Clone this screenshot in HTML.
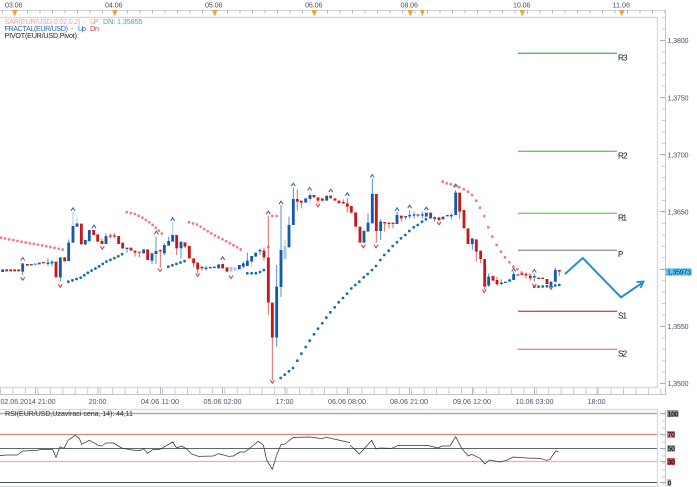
<!DOCTYPE html>
<html lang="cs">
<head>
<meta charset="utf-8">
<title>EUR/USD</title>
<style>
html,body{margin:0;padding:0;background:#fff;width:697px;height:487px;overflow:hidden}
svg{display:block;font-family:"Liberation Sans",sans-serif;font-size:7.2px;filter:blur(.35px)}
</style>
</head>
<body>
<svg width="697" height="487" viewBox="0 0 697 487" xmlns="http://www.w3.org/2000/svg">
<rect width="697" height="487" fill="#fff"/>

<!-- top axis -->
<g fill="none">
<path d="M0 10.5H665" stroke="#ccd0d8"/>
<path d="M0 17.5H657.5V387.5H0" stroke="#d6dae2" stroke-width="1.4"/>
<path d="M2 12H665" stroke="#b4b8c2" stroke-width="3" stroke-dasharray="1 11.5"/>
<path d="M665.5 10V394.5H0" stroke="#c4c8d2"/>
<path d="M663.5 17V388" stroke="#c4c8d2" stroke-width="3" stroke-dasharray="1 10.44"/>
<path d="M660 40.5h5M660 97.5h5M660 154.5h5M660 211.5h5M660 269.5h5M660 326.5h5M660 383.5h5" stroke="#a8acb6"/>
<path d="M0 391.5H665" stroke="#c4c8d2" stroke-width="6" stroke-dasharray="1 11.46"/>
<path d="M35.500 387v7M98 387v7M160.500 387v7M222.500 387v7M285 387v7M347.500 387v7M409.500 387v7M472.500 387v7M534.500 387v7M597 387v7" stroke="#b4b8c2"/>
</g>
<g fill="#f0a030">
<path d="M12 10h5.500l-2.700 6.500zM112 10h5.500l-2.700 6.500zM212 10h5.500l-2.700 6.500zM311.500 10h5.500l-2.700 6.500zM407.500 10h5.500l-2.700 6.500zM420 10h4.500l-2.200 6.500zM519.500 10h5.500l-2.700 6.500zM619 10h5.500l-2.700 6.500z"/>
</g>
<g fill="#50506a">
<text x="5" y="7.500" textLength="17.500">03.06</text>
<text x="105" y="7.500" textLength="17.500">04.06</text>
<text x="205" y="7.500" textLength="17.500">05.06</text>
<text x="305" y="7.500" textLength="17.500">06.06</text>
<text x="400.500" y="7.500" textLength="17.500">08.06</text>
<text x="513" y="7.500" textLength="17.500">10.06</text>
<text x="612.500" y="7.500" textLength="17.500">11.06</text>
</g>

<!-- legend -->
<text x="4.500" y="24" fill="#f0a0a0" textLength="76">SAR(EUR/USD,0.02,0.2)</text>
<text x="83" y="24" fill="#f0a0a0">-</text>
<text x="90" y="24" fill="#f0a0a0" textLength="8.500">UP</text>
<text x="103" y="24" fill="#4a9ac8" textLength="39.500">DN: 1,35855</text>
<text x="4.500" y="31" fill="#2a68b8" textLength="63.500">FRACTAL(EUR/USD)</text>
<text x="71" y="31" fill="#2a68b8">-</text>
<text x="78" y="31" fill="#2a68b8" textLength="8">Up</text>
<text x="90" y="31" fill="#cc3040" textLength="9">Dn</text>
<text x="4.500" y="38" fill="#222" textLength="72.500">PIVOT(EUR/USD,Pivot)</text>

<!-- right axis labels -->
<g fill="#50506a">
<text x="667.500" y="43.200" textLength="21">1,3800</text>
<text x="667.500" y="100.500" textLength="21">1,3750</text>
<text x="667.500" y="157.500" textLength="21">1,3700</text>
<text x="667.500" y="214.500" textLength="21">1,3650</text>
<text x="667.500" y="329" textLength="21">1,3550</text>
<text x="667.500" y="386" textLength="21">1,3500</text>
</g>
<rect x="665.700" y="268.300" width="26" height="7.400" fill="#62c6f6"/>
<text x="667" y="274.700" fill="#1c2c50" textLength="24">1,35973</text>

<!-- pivots -->
<g stroke-width="1.400" fill="none">
<path d="M518 53.300H617" stroke="#4ec04e"/>
<path d="M518 151.300H617" stroke="#5ed04e"/>
<path d="M518 213.300H617" stroke="#6edc5c"/>
<path d="M518 250.300H617" stroke="#9a9a9a"/>
<path d="M518 311.300H617" stroke="#d84c4c"/>
<path d="M518 349.300H617" stroke="#f47c88"/>
</g>
<g fill="#111" font-size="8.200">
<text x="618" y="60.500" textLength="9.500">R3</text>
<text x="618" y="158.500" textLength="9.500">R2</text>
<text x="618" y="220.500" textLength="9">R1</text>
<text x="618" y="257" textLength="5.500">P</text>
<text x="618" y="318.500" textLength="9">S1</text>
<text x="618" y="356.500" textLength="9">S2</text>
</g>

<!-- forecast zigzag -->
<g fill="none" stroke="#2090d0" stroke-width="2">
<path d="M565 274L582.700 258L621 297.300L643 282.300"/>
<path d="M636.500 282L643.500 281.500L640.500 288" stroke-width="1.800"/>
</g>

<!-- SAR red -->
<g fill="none" stroke="#f07c8c" stroke-width="2.800" stroke-linecap="round">
<path stroke-dasharray="0 4.190" d="M1 237.700L20 241.500L40 245L65 250"/>
<path stroke-dasharray="0 4.190" d="M126.700 212.300L135 214L143 218L151.700 224L160 231.700L164.300 236"/>
<path stroke-dasharray="0 4.190" d="M189 222.300L197 224.500L205.700 230L214 235L222 239L230 243.300L235 246L243.300 251"/>
<path d="M268.300 247h0M272.300 216h0M276.700 216h0"/>
<path d="M442.700 181.700h0M446.700 183.300h0M450.700 184.300h0M455 186h0M459.300 187.300h0M463.700 189.300h0M468 191.700h0M472 195h0M476.300 200.700h0M480 207.700h0M484.300 216h0M488.300 227.300h0M492.300 236.700h0M496.700 245h0M501 251.700h0M505 257.300h0M509.300 262.300h0M513.300 266.700h0M517.300 269.300h0M521.700 272.700h0M526 274h0M530 275h0"/>
</g>

<!-- Candles: zoom-1 -->
<g transform="translate(0 180) scale(.33333)" fill="none">
<path stroke="#5a8cc8" stroke-width="3" d="M68 250V285M144 235V258M156 240V260M181 232V305M206 178V190M256 180V195M268 150V185M318 160V170M381 205V218M456 218V252M468 170V252M493 190V225M506 170V185M543 205V235M618 258V272"/>
<path stroke="#a8c6ea" stroke-width="3" d="M219 95V140M231 112V130M518 125V165"/>
<path stroke="#d86a6a" stroke-width="3" d="M306 175V192M331 160V175M343 160V175M368 205V208M405 218V230M418 218V232M481 208V262M530 205V225M555 200V205M581 250V262M593 268V282M606 265V272"/>
<path stroke="#1458b0" stroke-width="8.500" d="M8 268V276M68 250V275M94 252V256M106 251V254M118 248V253M144 248V252M156 245V250M181 232V292M206 188V243M219 138V188M231 130V140M256 180V193M268 150V183M318 168V192M381 203V207M431 208V220M456 220V242M468 213V222M493 195V220M506 183V197M518 165V185M543 185V205M618 263V267M631 261V265M643 260V264M656 253V265"/>
<path stroke="#c81818" stroke-width="8.500" d="M20 268V274M32 268V274M44 268V274M56 268V274M82 252V257M130 246V250M168 245V292M194 232V244M244 131V193M281 150V165M293 163V185M306 183V192M331 166V170M343 166V170M356 168V192M368 188V205M393 203V212M405 212V218M418 215V218M443 208V240M481 210V214M530 165V205M555 187V200M568 198V235M581 235V250M593 248V268M606 260V265M668 252V265M681 262V275"/>
</g>

<!-- Candles: zoom-2 -->
<g transform="translate(230 170) scale(.33333)" fill="none">
<path stroke="#5a8cc8" stroke-width="3" d="M40 275V295M52 248V272M90 235V255M140 285V350M140 503V530M153 105V240M153 351V381M177 140V165M190 52V87M414 130V158M427 25V72M452 148V210M501 125V135M527 142V150M539 120V145M552 125V145M577 125V145M664 130V148"/>
<path stroke="#a8c6ea" stroke-width="3" d="M65 275V290M165 210V228M240 68V100M402 175V220"/>
<path stroke="#d86a6a" stroke-width="3" d="M102 232V272M115 137V262M115 398V435M127 503V630M202 58V122M214 98V115M264 92V100M277 92V95M340 88V102M352 85V128M364 128V130M439 183V218M464 160V185M477 162V175M489 162V175M514 145V155M564 137V142M614 147V155M627 150V155"/>
<path stroke="#a8c6ea" stroke-width="8.500" d="M3 290V305M15 292V302M165 228V268"/>
<path stroke="#1458b0" stroke-width="8.500" d="M28 285V298M40 280V290M52 272V288M65 258V275M77 248V260M90 240V244M140 350V503M153 240V351M177 165V232M190 87V165M227 85V98M240 75V87M290 77V92M402 183V218M414 158V185M427 72V160M452 155V183M501 135V162M527 138V142M539 135V139M552 133V137M577 133V137M589 128V140M639 140V148M652 135V139M664 135V139"/>
<path stroke="#c81818" stroke-width="8.500" d="M102 242V262M115 262V398M127 398V503M202 87V95M214 92V98M252 75V82M264 82V92M277 85V92M302 77V85M315 85V92M327 92V100M340 96V100M352 100V110M364 108V128M377 127V170M390 170V218M439 72V183M464 156V160M477 158V162M489 158V162M514 137V145M564 133V137M602 128V145M614 143V147M627 142V150"/>
</g>

<!-- Candles: zoom-3 -->
<g transform="translate(440 170) scale(.33333)" fill="none">
<path stroke="#5a8cc8" stroke-width="3" d="M47 60V68M97 222V240M146 310V350M184 328V345M221 305V312M283 310V335M346 292V337"/>
<path stroke="#d86a6a" stroke-width="3" d="M59 125V147M109 245V275M122 267V280M134 350V360M171 320V347M258 317V325M271 325V332M358 305V318"/>
<path stroke="#1458b0" stroke-width="8.500" d="M47 68V135M97 205V222M146 320V347M184 338V342M196 335V339M209 328V335M221 312V330M283 318V322M333 335V345M346 300V335"/>
<path stroke="#c81818" stroke-width="8.500" d="M59 68V125M72 120V175M84 175V222M109 208V245M122 242V267M134 267V350M159 318V332M171 330V343M234 313V317M246 311V315M258 313V317M271 318V325M296 323V327M308 323V327M321 327V342M358 300V305"/>
</g>

<!-- SAR blue -->
<g fill="none" stroke="#1a6ea8" stroke-width="2.800" stroke-linecap="round">
<path stroke-dasharray="0 4.340" d="M68.300 281.700L81 277.500L89.300 271.700L97.700 267.300L106 261.700L114.300 258.300L122.700 254"/>
<path stroke-dasharray="0 4.300" d="M168.300 266.700L185 261"/>
<path stroke-dasharray="0 4.300" d="M247.300 273.300L255.500 273.300L260 272L264 270"/>
<path d="M280.700 378h0M284.700 374.700h0M289 371.300h0M293 368h0M297.300 360.700h0M301.300 353.700h0M305.700 347h0M309.700 340.700h0M314 334.300h0M318 328.700h0M322.300 323.300h0M326.300 317.700h0M330.300 312.300h0M334.700 307.300h0M338.700 302.300h0M343 298h0M347 293.700h0M351.300 288.500h0M355.300 285h0M359.300 281.700h0M363.700 277.300h0M367.700 274h0M372 270h0M376 266h0M380.300 260h0M384.300 255h0M388.700 250.700h0M392.700 246h0M397 242.300h0M401 238.300h0M405.300 235h0M409.300 231h0M413.700 227.300h0M417.700 225h0M422 221.700h0M426 219.300h0M430.300 217.300h0M434.700 218h0"/>
<path d="M534.300 286.700h0M538.500 286.700h0M542.700 286.500h0M546.900 286.300h0M551 286h0M555.200 285.500h0M559.300 285h0"/>
</g>

<!-- fractal markers -->
<g fill="none" stroke-width="1">
<path stroke="#2a62b0" d="M20.700 260.500l2 -3l2 3M71 210.800l2 -3l2 3M92 228.200l2 -3l2 3M154.300 234.200l2 -3l2 3M170.700 220.800l2 -3l2 3M220.700 259.800l2 -3l2 3M266.300 214.200l2 -3l2 3M279 204.200l2 -3l2 3M291.300 186.200l2 -3l2 3M307.700 190.500l2 -3l2 3M328.700 192.200l2 -3l2 3M345.300 195.800l2 -3l2 3M370.300 177.500l2 -3l2 3M395 210.800l2 -3l2 3M407.700 208.200l2 -3l2 3M424.300 210.200l2 -3l2 3M453.700 187.200l2 -3l2 3M511.700 271.500l2 -3l2 3M532.300 272.500l2 -3l2 3"/>
<path stroke="#d03a44" d="M20.700 277.200l2 3l2 -3M58.300 284.200l2 3l2 -3M100.300 246.200l2 3l2 -3M158 268.500l2 3l2 -3M195.700 273.500l2 3l2 -3M229 275.500l2 3l2 -3M316 203.800l2 3l2 -3M361.300 244.800l2 3l2 -3M374 244.800l2 3l2 -3M437 221.800l2 3l2 -3M270.300 380.200l2 3l2 -3M482.300 289.500l2 3l2 -3M532.300 283.800l2 3l2 -3M549 286.200l2 3l2 -3"/>
</g>

<!-- bottom labels -->
<g fill="#50506a">
<text x="0.500" y="404" textLength="55">02.06.2014 21:00</text>
<text x="88.500" y="404" textLength="18">20:00</text>
<text x="141" y="404" textLength="38">04.06 11:00</text>
<text x="203.500" y="404" textLength="38">05.06 02:00</text>
<text x="275.500" y="404" textLength="18">17:00</text>
<text x="328" y="404" textLength="38">06.06 08:00</text>
<text x="390" y="404" textLength="38">08.06 21:00</text>
<text x="453" y="404" textLength="38">09.06 12:00</text>
<text x="515.500" y="404" textLength="38">10.06 03:00</text>
<text x="587.500" y="404" textLength="18">18:00</text>
</g>

<!-- RSI panel -->
<g fill="none">
<path d="M0 409.500H657.500V486.500H0" stroke="#d6dae2" stroke-width="1.200"/>
<path d="M665.500 410V486" stroke="#c4c8d2"/>
<path d="M663.500 413.500V484" stroke="#c4c8d2" stroke-width="3" stroke-dasharray="1 6"/>
<path d="M660 413.500h6M660 434.500h6M660 448.500h6M660 461.500h6M660 482.500h6" stroke="#a8acb6"/>
<path d="M0 413.500H657" stroke="#aaaaaa" stroke-width="1.600"/>
<path d="M0 434.500H657" stroke="#e08080" stroke-width="1.200"/>
<path d="M0 448.500H657" stroke="#666"/>
<path d="M0 461.500H657" stroke="#f8a8b4" stroke-width="1.200"/>
<path d="M0 482.500H657" stroke="#555"/>
</g>
<text x="5" y="416" fill="#333" textLength="128">RSI(EUR/USD,Uzavírací cena, 14): 44,11</text>
<g transform="translate(0 380) scale(.33333)" fill="none" stroke="#333" stroke-width="2.200" stroke-linejoin="round">
<polyline points="0,227 20,225 52,225 68,213 110,211 125,208 158,208 168,232 180,200 192,205 205,180 225,166 238,175 245,193 268,181 295,196 305,198 318,189 340,189 365,204 395,210 420,212 430,206 443,220 460,208 480,208 518,186 530,204 545,198 560,207 575,222 595,229 640,228 655,221 685,229 700,228 720,216 735,216 775,184 790,195 800,240 817,268 830,225 843,194 855,192 880,172 930,171 965,176 980,172 1050,188"/>
</g>
<g transform="translate(350 380) scale(.33333)" fill="none" stroke="#333" stroke-width="2.200" stroke-linejoin="round">
<polyline points="0,195 28,222 65,181 78,207 90,204 125,205 145,196 175,197 210,197 232,196 265,204 275,198 300,198 317,170 335,205 355,228 365,223 390,235 405,252 418,240 450,246 470,241 490,231 530,234 570,235 590,241 600,238 617,213 625,215"/>
</g>

<rect x="667" y="410" width="11.500" height="7" fill="#9c9c9c"/>
<rect x="667" y="431" width="8" height="7" fill="#f07878"/>
<rect x="667" y="445" width="8" height="7" fill="#b4b4b4"/>
<rect x="667" y="458" width="8" height="7" fill="#e84850"/>
<rect x="667" y="479" width="4" height="7" fill="#c4c4c4"/>
<g fill="#222" font-weight="bold">
<text x="667.500" y="416.500" textLength="11">100</text>
<text x="667.500" y="437" textLength="7.500">70</text>
<text x="667.500" y="451" textLength="7.500">50</text>
<text x="667.500" y="464.500" textLength="7.500">30</text>
<text x="667.500" y="485.500" textLength="3.700">0</text>
</g>
</svg>
</body>
</html>
